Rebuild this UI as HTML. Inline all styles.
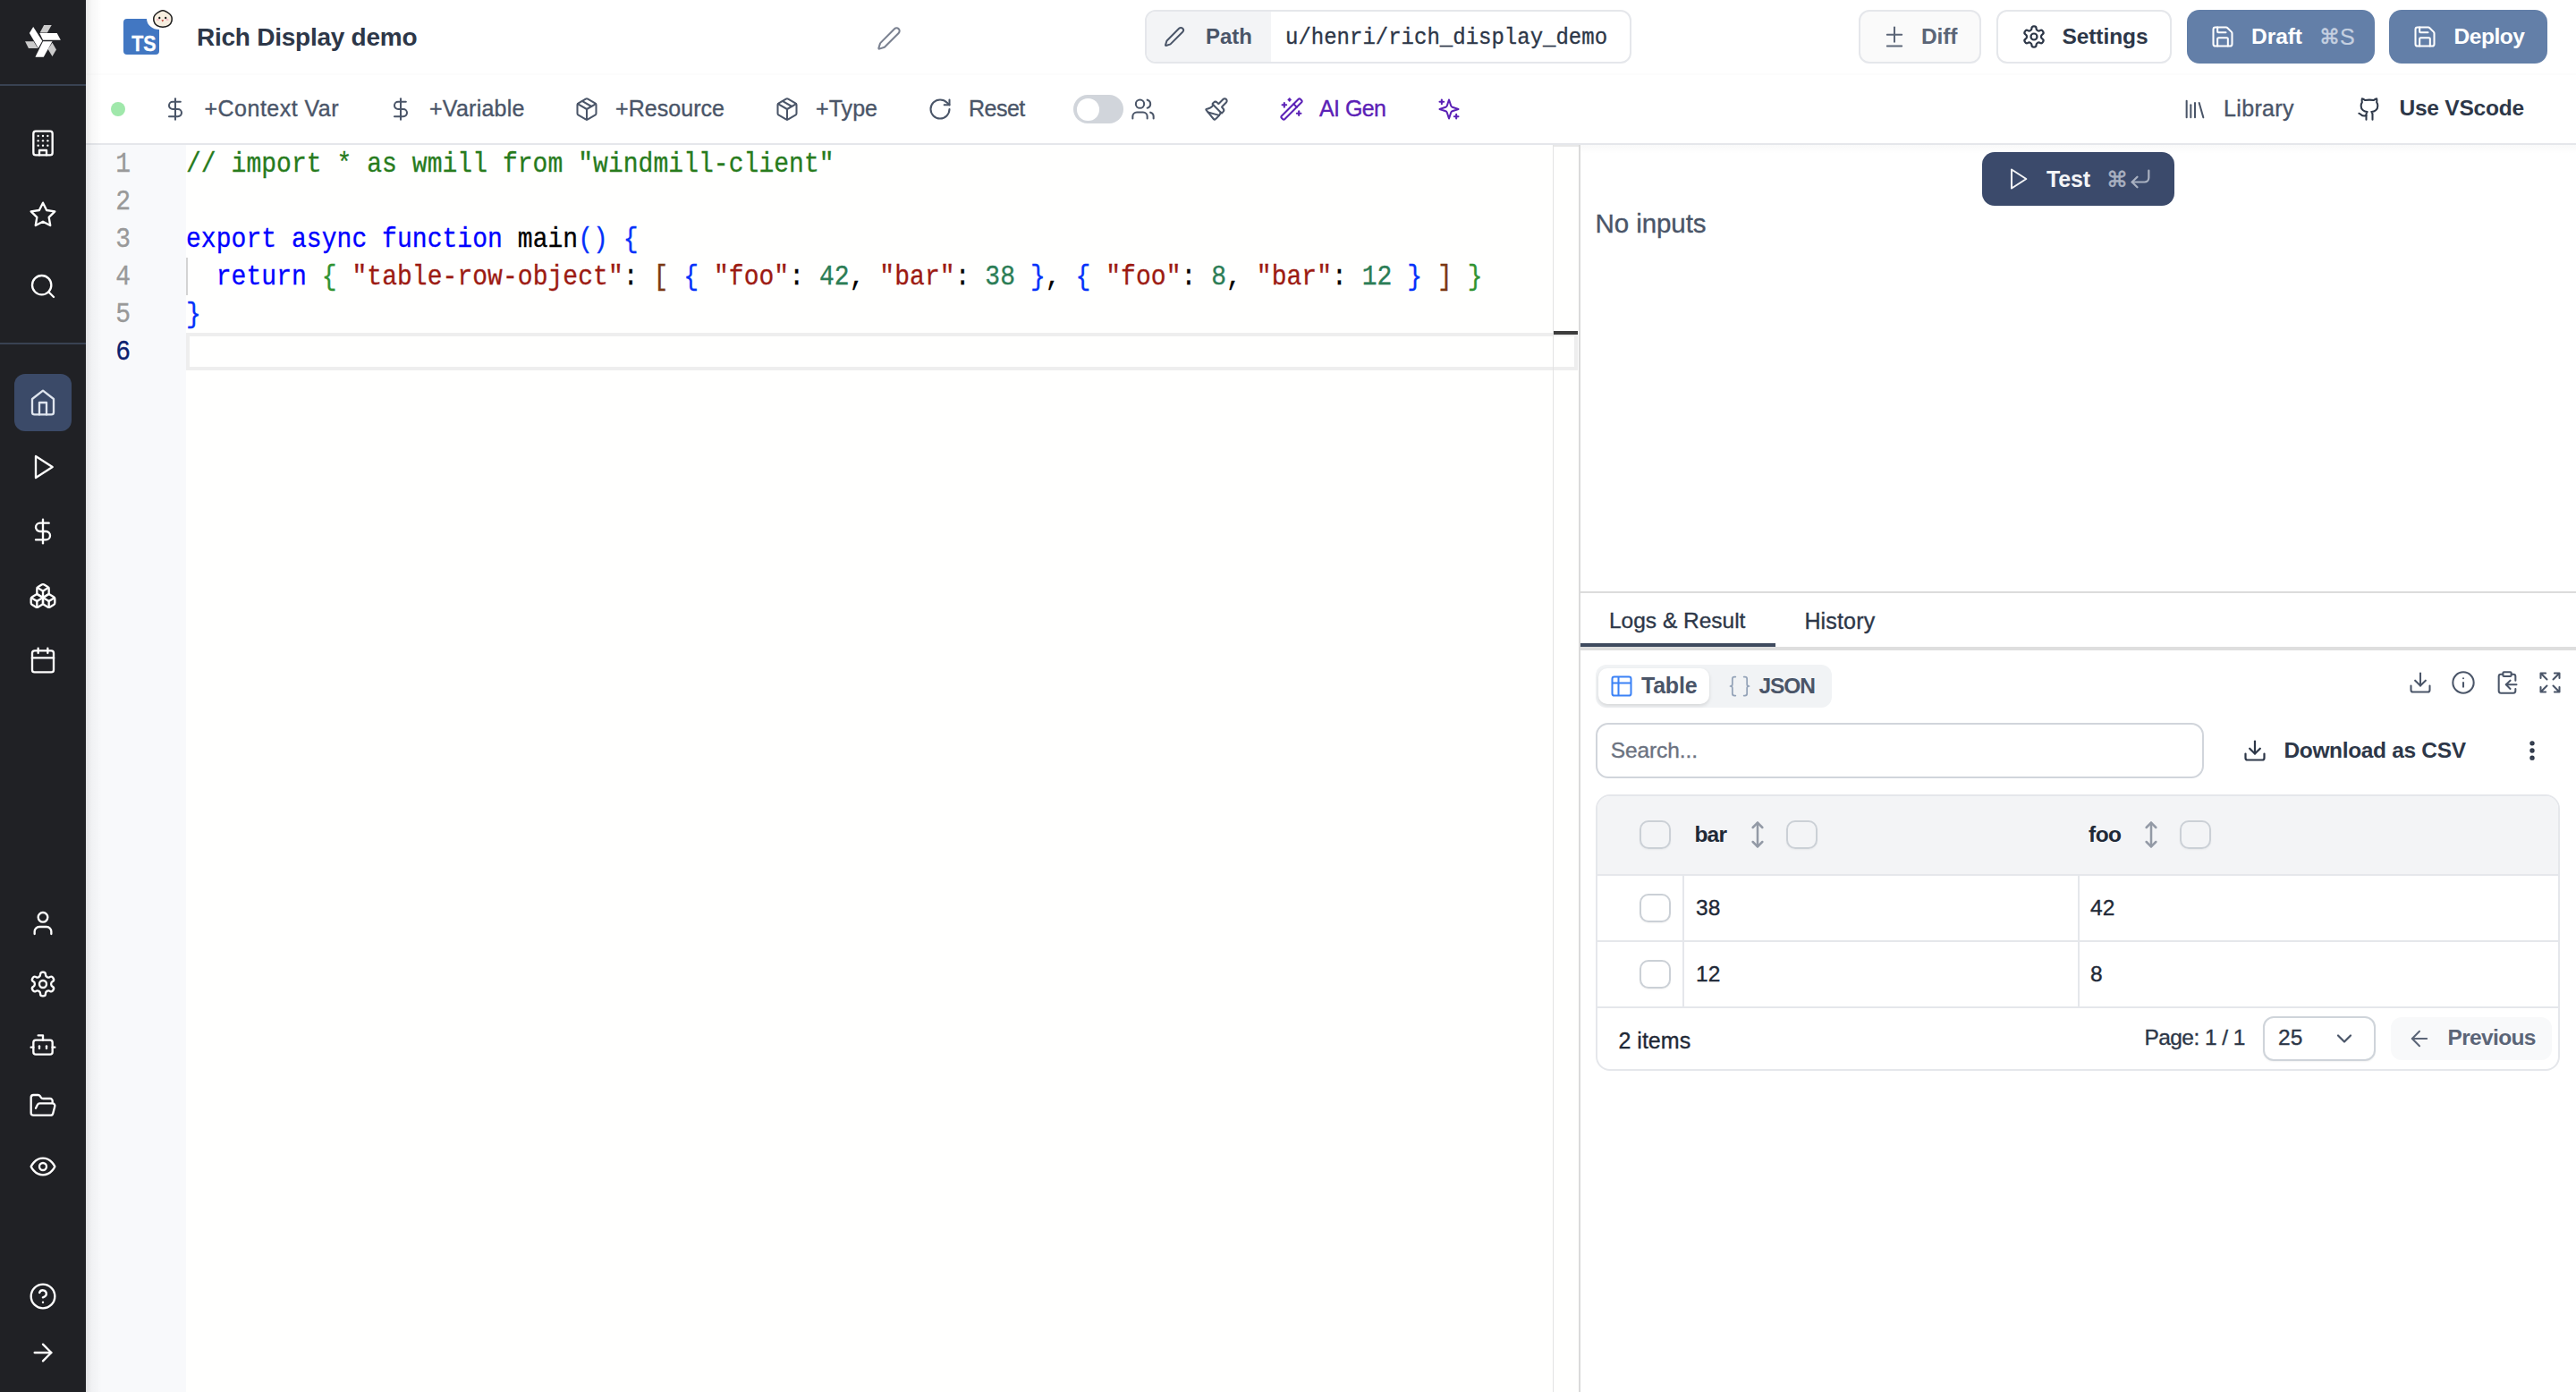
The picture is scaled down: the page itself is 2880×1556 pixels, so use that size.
<!DOCTYPE html>
<html><head><meta charset="utf-8"><title>Rich Display demo</title>
<style>
html,body{margin:0;padding:0;width:2880px;height:1556px;overflow:hidden;background:#fff;}
body{position:relative;font-family:"Liberation Sans", sans-serif;}
.a{position:absolute;}
.t{position:absolute;white-space:pre;}
.code{position:absolute;height:42px;line-height:42px;font-family:"Liberation Mono", monospace;font-size:28px;white-space:pre;color:#000;padding-top:2px;box-sizing:border-box;letter-spacing:0.05px;-webkit-text-stroke-width:0.3px;transform:scaleY(1.1);transform-origin:0 30.5px;}
.ln{text-align:right;}
</style></head><body>
<div class="a" style="left:0px;top:0px;width:96px;height:1556px;background:#202125"></div>
<div class="a" style="left:0px;top:94px;width:96px;height:2px;background:#394252"></div>
<div class="a" style="left:0px;top:383px;width:96px;height:2px;background:#394252"></div>
<svg class="a" style="left:20px;top:20px" width="56" height="52" viewBox="0 0 1499 1392">
<polygon points="215,700 470,700 600,910 320,910" fill="#cbcbcb"/>
<polygon points="660,440 780,215 1010,215 880,440" fill="#cbcbcb"/>
<polygon points="900,940 1030,740 1150,950 1030,1150" fill="#cbcbcb"/>
<polygon points="345,455 460,265 730,690 610,905" fill="#ffffff"/>
<polygon points="650,455 1170,455 1280,660 750,660" fill="#ffffff"/>
<polygon points="750,700 1030,700 770,1170 520,1170" fill="#ffffff"/>
</svg>
<svg class="a" style="left:32.0px;top:144.0px;" width="32" height="32" viewBox="0 0 24 24" fill="none" stroke="#ffffff" stroke-width="1.75" stroke-linecap="round" stroke-linejoin="round"><rect width="16" height="20" x="4" y="2" rx="2" ry="2"/><path d="M9 22v-4h6v4"/><path d="M8 6h.01"/><path d="M16 6h.01"/><path d="M12 6h.01"/><path d="M12 10h.01"/><path d="M12 14h.01"/><path d="M16 10h.01"/><path d="M16 14h.01"/><path d="M8 10h.01"/><path d="M8 14h.01"/></svg>
<svg class="a" style="left:32.0px;top:223.5px;" width="32" height="32" viewBox="0 0 24 24" fill="none" stroke="#ffffff" stroke-width="1.75" stroke-linecap="round" stroke-linejoin="round"><polygon points="12 2 15.09 8.26 22 9.27 17 14.14 18.18 21.02 12 17.77 5.82 21.02 7 14.14 2 9.27 8.91 8.26 12 2"/></svg>
<svg class="a" style="left:32.0px;top:304.0px;" width="32" height="32" viewBox="0 0 24 24" fill="none" stroke="#ffffff" stroke-width="1.75" stroke-linecap="round" stroke-linejoin="round"><circle cx="11" cy="11" r="8"/><path d="m21 21-4.3-4.3"/></svg>
<div class="a" style="left:16px;top:418px;width:64px;height:64px;background:#3b4a68;border-radius:12px"></div>
<svg class="a" style="left:32.0px;top:434.0px;" width="32" height="32" viewBox="0 0 24 24" fill="none" stroke="#dfe5ee" stroke-width="1.75" stroke-linecap="round" stroke-linejoin="round"><path d="m3 9 9-7 9 7v11a2 2 0 0 1-2 2H5a2 2 0 0 1-2-2z"/><polyline points="9 22 9 12 15 12 15 22"/></svg>
<svg class="a" style="left:32.0px;top:505.7px;" width="32" height="32" viewBox="0 0 24 24" fill="none" stroke="#ffffff" stroke-width="1.75" stroke-linecap="round" stroke-linejoin="round"><polygon points="6 3 20 12 6 21 6 3"/></svg>
<svg class="a" style="left:32.0px;top:578.0px;" width="32" height="32" viewBox="0 0 24 24" fill="none" stroke="#ffffff" stroke-width="1.75" stroke-linecap="round" stroke-linejoin="round"><line x1="12" x2="12" y1="2" y2="22"/><path d="M17 5H9.5a3.5 3.5 0 0 0 0 7h5a3.5 3.5 0 0 1 0 7H6"/></svg>
<svg class="a" style="left:32.0px;top:650.0px;" width="32" height="32" viewBox="0 0 24 24" fill="none" stroke="#ffffff" stroke-width="1.75" stroke-linecap="round" stroke-linejoin="round"><path d="M2.97 12.92A2 2 0 0 0 2 14.63v3.24a2 2 0 0 0 .97 1.71l3 1.8a2 2 0 0 0 2.06 0L12 19v-5.5l-5-3-4.03 2.42Z"/><path d="m7 16.5-4.74-2.85"/><path d="m7 16.5 5-3"/><path d="M7 16.5v5.17"/><path d="M12 13.5V19l3.970 2.38a2 2 0 0 0 2.06 0l3-1.8a2 2 0 0 0 .97-1.71v-3.24a2 2 0 0 0-.97-1.71L17 10.5l-5 3Z"/><path d="m17 16.5-5-3"/><path d="m17 16.5 4.74-2.85"/><path d="M17 16.5v5.17"/><path d="M7.97 4.42A2 2 0 0 0 7 6.13v4.37l5 3 5-3V6.13a2 2 0 0 0-.97-1.71l-3-1.8a2 2 0 0 0-2.06 0l-3 1.8Z"/><path d="M12 8 7.26 5.15"/><path d="m12 8 4.74-2.85"/><path d="M12 13.5V8"/></svg>
<svg class="a" style="left:32.0px;top:721.5px;" width="32" height="32" viewBox="0 0 24 24" fill="none" stroke="#ffffff" stroke-width="1.75" stroke-linecap="round" stroke-linejoin="round"><path d="M8 2v4"/><path d="M16 2v4"/><rect width="18" height="18" x="3" y="4" rx="2"/><path d="M3 10h18"/></svg>
<svg class="a" style="left:32.0px;top:1016.0px;" width="32" height="32" viewBox="0 0 24 24" fill="none" stroke="#ffffff" stroke-width="1.75" stroke-linecap="round" stroke-linejoin="round"><path d="M19 21v-2a4 4 0 0 0-4-4H9a4 4 0 0 0-4 4v2"/><circle cx="12" cy="7" r="4"/></svg>
<svg class="a" style="left:32.0px;top:1084.0px;" width="32" height="32" viewBox="0 0 24 24" fill="none" stroke="#ffffff" stroke-width="1.75" stroke-linecap="round" stroke-linejoin="round"><path d="M12.22 2h-.44a2 2 0 0 0-2 2v.18a2 2 0 0 1-1 1.73l-.43.25a2 2 0 0 1-2 0l-.15-.08a2 2 0 0 0-2.73.73l-.22.38a2 2 0 0 0 .73 2.73l.15.1a2 2 0 0 1 1 1.72v.51a2 2 0 0 1-1 1.74l-.15.09a2 2 0 0 0-.73 2.73l.22.38a2 2 0 0 0 2.73.73l.15-.08a2 2 0 0 1 2 0l.43.25a2 2 0 0 1 1 1.73V20a2 2 0 0 0 2 2h.44a2 2 0 0 0 2-2v-.18a2 2 0 0 1 1-1.73l.43-.25a2 2 0 0 1 2 0l.15.08a2 2 0 0 0 2.73-.73l.22-.39a2 2 0 0 0-.73-2.73l-.15-.08a2 2 0 0 1-1-1.74v-.5a2 2 0 0 1 1-1.74l.15-.09a2 2 0 0 0 .73-2.73l-.22-.38a2 2 0 0 0-2.73-.73l-.15.08a2 2 0 0 1-2 0l-.43-.25a2 2 0 0 1-1-1.73V4a2 2 0 0 0-2-2z"/><circle cx="12" cy="12" r="3"/></svg>
<svg class="a" style="left:32.0px;top:1152.0px;" width="32" height="32" viewBox="0 0 24 24" fill="none" stroke="#ffffff" stroke-width="1.75" stroke-linecap="round" stroke-linejoin="round"><path d="M12 8V4H8"/><rect width="16" height="12" x="4" y="8" rx="2"/><path d="M2 14h2"/><path d="M20 14h2"/><path d="M15 13v2"/><path d="M9 13v2"/></svg>
<svg class="a" style="left:32.0px;top:1220.0px;" width="32" height="32" viewBox="0 0 24 24" fill="none" stroke="#ffffff" stroke-width="1.75" stroke-linecap="round" stroke-linejoin="round"><path d="m6 14 1.5-2.9A2 2 0 0 1 9.24 10H20a2 2 0 0 1 1.94 2.5l-1.54 6a2 2 0 0 1-1.95 1.5H4a2 2 0 0 1-2-2V5a2 2 0 0 1 2-2h3.9a2 2 0 0 1 1.69.9l.81 1.2a2 2 0 0 0 1.67.9H18a2 2 0 0 1 2 2v2"/></svg>
<svg class="a" style="left:32.0px;top:1288.0px;" width="32" height="32" viewBox="0 0 24 24" fill="none" stroke="#ffffff" stroke-width="1.75" stroke-linecap="round" stroke-linejoin="round"><path d="M2 12s3-7 10-7 10 7 10 7-3 7-10 7-10-7-10-7Z"/><circle cx="12" cy="12" r="3"/></svg>
<svg class="a" style="left:32.0px;top:1433.0px;" width="32" height="32" viewBox="0 0 24 24" fill="none" stroke="#ffffff" stroke-width="1.75" stroke-linecap="round" stroke-linejoin="round"><circle cx="12" cy="12" r="10"/><path d="M9.09 9a3 3 0 0 1 5.83 1c0 2-3 3-3 3"/><path d="M12 17h.01"/></svg>
<svg class="a" style="left:32.0px;top:1496.0px;" width="32" height="32" viewBox="0 0 24 24" fill="none" stroke="#ffffff" stroke-width="1.75" stroke-linecap="round" stroke-linejoin="round"><path d="M5 12h14"/><path d="m12 5 7 7-7 7"/></svg>
<div class="a" style="left:96px;top:0px;width:2784px;height:160px;background:#ffffff"></div>
<div class="a" style="left:96px;top:160px;width:2784px;height:2px;background:#e5e7eb"></div>
<div class="a" style="left:96px;top:82px;width:2784px;height:2px;background:rgba(0,0,0,0.012)"></div>
<svg class="a" style="left:138px;top:21px" width="40" height="40" viewBox="0 0 40 40">
<path d="M4,0 H26 A14,12 0 0 0 40,12 V36 A4,4 0 0 1 36,40 H4 A4,4 0 0 1 0,36 V4 A4,4 0 0 1 4,0 Z" fill="#4277c2"/>
<text x="9.3" y="36.4" font-family="Liberation Sans" font-weight="bold" font-size="24.5" textLength="27.3" lengthAdjust="spacingAndGlyphs" fill="#ffffff" stroke="#ffffff" stroke-width="0.4">TS</text>
</svg>
<svg class="a" style="left:170px;top:10px" width="24" height="22" viewBox="0 0 24 22">
<path d="M12,1.8 C14.5,1.8 17,3.5 19.5,5.5 C22,7.5 22.6,10.5 22,13.5 C21,18 16.5,20.2 12,20.2 C7.5,20.2 3,18 2,13.5 C1.4,10.5 2,7.5 4.5,5.5 C7,3.5 9.5,1.8 12,1.8 Z" fill="#f6eedf" stroke="#1a1a1a" stroke-width="1.5"/>
<ellipse cx="8.3" cy="10" rx="1.1" ry="1.3" fill="#111"/><ellipse cx="15.2" cy="10" rx="1.1" ry="1.3" fill="#111"/>
<ellipse cx="6.5" cy="12" rx="1.6" ry="0.9" fill="#f4b8c8"/><ellipse cx="17" cy="12" rx="1.6" ry="0.9" fill="#f4b8c8"/>
<path d="M10.4,12.2 L13.2,12.2 L11.8,14.6 Z" fill="#c0392b"/>
</svg>
<div class="t" style="left:220.0px;top:24.3px;font-size:28px;line-height:36px;font-family:'Liberation Sans', sans-serif;font-weight:bold;color:#2d3748;letter-spacing:-0.25px;">Rich Display demo</div>
<svg class="a" style="left:980.0px;top:29.0px;" width="28" height="28" viewBox="0 0 24 24" fill="none" stroke="#7a8190" stroke-width="1.75" stroke-linecap="round" stroke-linejoin="round"><path d="M21.174 6.812a1 1 0 0 0-3.986-3.987L3.842 16.174a2 2 0 0 0-.5.83l-1.321 4.352a.5.5 0 0 0 .623.622l4.353-1.32a2 2 0 0 0 .83-.497z"/></svg>
<div class="a" style="left:1280px;top:11px;width:544px;height:60px;border:2px solid #e5e7eb;border-radius:12px;box-sizing:border-box;background:#fff;overflow:hidden"></div>
<div class="a" style="left:1282px;top:13px;width:139px;height:56px;background:#f3f4f6;border-radius:10px 0 0 10px"></div>
<svg class="a" style="left:1300.5px;top:28.5px;" width="24" height="24" viewBox="0 0 24 24" fill="none" stroke="#4a5568" stroke-width="2" stroke-linecap="round" stroke-linejoin="round"><path d="M21.174 6.812a1 1 0 0 0-3.986-3.987L3.842 16.174a2 2 0 0 0-.5.83l-1.321 4.352a.5.5 0 0 0 .623.622l4.353-1.32a2 2 0 0 0 .83-.497z"/></svg>
<div class="t" style="left:1348.0px;top:25.2px;font-size:24px;line-height:31px;font-family:'Liberation Sans', sans-serif;font-weight:bold;color:#4a5568;">Path</div>
<div class="t" style="left:1437.0px;top:27.1px;font-size:24px;line-height:31px;font-family:'Liberation Mono', monospace;font-weight:normal;color:#2d3748;-webkit-text-stroke:0.3px #2d3748;transform:scaleY(1.08);transform-origin:0 70%;">u/henri/rich_display_demo</div>
<div class="a" style="left:2078px;top:11px;width:137px;height:60px;border:2px solid #e5e7eb;border-radius:12px;box-sizing:border-box;background:#fafafa"></div>
<svg class="a" style="left:2104.0px;top:27.0px;" width="28" height="28" viewBox="0 0 24 24" fill="none" stroke="#5b6577" stroke-width="1.75" stroke-linecap="round" stroke-linejoin="round"><path d="M12 3v14"/><path d="M5 10h14"/><path d="M5 21h14"/></svg>
<div class="t" style="left:2148.0px;top:24.5px;font-size:24.5px;line-height:32px;font-family:'Liberation Sans', sans-serif;font-weight:bold;color:#5b6577;letter-spacing:-0.133px;">Diff</div>
<div class="a" style="left:2232px;top:11px;width:196px;height:60px;border:2px solid #e5e7eb;border-radius:12px;box-sizing:border-box;background:#fff"></div>
<svg class="a" style="left:2260.0px;top:27.0px;" width="28" height="28" viewBox="0 0 24 24" fill="none" stroke="#2d3748" stroke-width="1.9" stroke-linecap="round" stroke-linejoin="round"><path d="M12.22 2h-.44a2 2 0 0 0-2 2v.18a2 2 0 0 1-1 1.73l-.43.25a2 2 0 0 1-2 0l-.15-.08a2 2 0 0 0-2.73.73l-.22.38a2 2 0 0 0 .73 2.73l.15.1a2 2 0 0 1 1 1.72v.51a2 2 0 0 1-1 1.74l-.15.09a2 2 0 0 0-.73 2.73l.22.38a2 2 0 0 0 2.73.73l.15-.08a2 2 0 0 1 2 0l.43.25a2 2 0 0 1 1 1.73V20a2 2 0 0 0 2 2h.44a2 2 0 0 0 2-2v-.18a2 2 0 0 1 1-1.73l.43-.25a2 2 0 0 1 2 0l.15.08a2 2 0 0 0 2.73-.73l.22-.39a2 2 0 0 0-.73-2.73l-.15-.08a2 2 0 0 1-1-1.74v-.5a2 2 0 0 1 1-1.74l.15-.09a2 2 0 0 0 .73-2.73l-.22-.38a2 2 0 0 0-2.73-.73l-.15.08a2 2 0 0 1-2 0l-.43-.25a2 2 0 0 1-1-1.73V4a2 2 0 0 0-2-2z"/><circle cx="12" cy="12" r="3"/></svg>
<div class="t" style="left:2305.5px;top:24.5px;font-size:24.5px;line-height:32px;font-family:'Liberation Sans', sans-serif;font-weight:bold;color:#2d3748;letter-spacing:-0.086px;">Settings</div>
<div class="a" style="left:2445px;top:11px;width:210px;height:60px;background:#637fa8;border-radius:14px"></div>
<svg class="a" style="left:2471.0px;top:27.0px;" width="28" height="28" viewBox="0 0 24 24" fill="none" stroke="#ffffff" stroke-width="1.75" stroke-linecap="round" stroke-linejoin="round"><path d="M15.2 3a2 2 0 0 1 1.4.6l3.8 3.8a2 2 0 0 1 .6 1.4V19a2 2 0 0 1-2 2H5a2 2 0 0 1-2-2V5a2 2 0 0 1 2-2z"/><path d="M17 21v-7a1 1 0 0 0-1-1H8a1 1 0 0 0-1 1v7"/><path d="M7 3v4a1 1 0 0 0 1 1h7"/></svg>
<div class="t" style="left:2517.0px;top:24.8px;font-size:24.5px;line-height:32px;font-family:'Liberation Sans', sans-serif;font-weight:bold;color:#ffffff;letter-spacing:-0.05px;">Draft</div>
<div class="t" style="left:2593.0px;top:27.3px;font-size:22.5px;line-height:29px;font-family:'Liberation Sans', sans-serif;font-weight:normal;color:#c5d0e0;-webkit-text-stroke:0.5px #c5d0e0;">&#8984;</div>
<div class="t" style="left:2616.0px;top:24.6px;font-size:25px;line-height:32px;font-family:'Liberation Sans', sans-serif;font-weight:normal;color:#c5d0e0;-webkit-text-stroke:0.2px #c5d0e0;">S</div>
<div class="a" style="left:2671px;top:11px;width:177px;height:60px;background:#637fa8;border-radius:14px"></div>
<svg class="a" style="left:2697.0px;top:27.0px;" width="28" height="28" viewBox="0 0 24 24" fill="none" stroke="#ffffff" stroke-width="1.75" stroke-linecap="round" stroke-linejoin="round"><path d="M15.2 3a2 2 0 0 1 1.4.6l3.8 3.8a2 2 0 0 1 .6 1.4V19a2 2 0 0 1-2 2H5a2 2 0 0 1-2-2V5a2 2 0 0 1 2-2z"/><path d="M17 21v-7a1 1 0 0 0-1-1H8a1 1 0 0 0-1 1v7"/><path d="M7 3v4a1 1 0 0 0 1 1h7"/></svg>
<div class="t" style="left:2743.5px;top:24.8px;font-size:24.5px;line-height:32px;font-family:'Liberation Sans', sans-serif;font-weight:bold;color:#ffffff;letter-spacing:-0.44px;">Deploy</div>
<div class="a" style="left:124px;top:114px;width:16px;height:16px;background:#a0e8ab;border-radius:50%"></div>
<svg class="a" style="left:182.0px;top:108.0px;" width="28" height="28" viewBox="0 0 24 24" fill="none" stroke="#4a5568" stroke-width="1.75" stroke-linecap="round" stroke-linejoin="round"><line x1="12" x2="12" y1="2" y2="22"/><path d="M17 5H9.5a3.5 3.5 0 0 0 0 7h5a3.5 3.5 0 0 1 0 7H6"/></svg>
<div class="t" style="left:228.5px;top:105.3px;font-size:25px;line-height:32px;font-family:'Liberation Sans', sans-serif;font-weight:normal;color:#4a5568;letter-spacing:0.482px;-webkit-text-stroke:0.35px #4a5568;">+Context Var</div>
<svg class="a" style="left:434.0px;top:108.0px;" width="28" height="28" viewBox="0 0 24 24" fill="none" stroke="#4a5568" stroke-width="1.75" stroke-linecap="round" stroke-linejoin="round"><line x1="12" x2="12" y1="2" y2="22"/><path d="M17 5H9.5a3.5 3.5 0 0 0 0 7h5a3.5 3.5 0 0 1 0 7H6"/></svg>
<div class="t" style="left:480.0px;top:105.3px;font-size:25px;line-height:32px;font-family:'Liberation Sans', sans-serif;font-weight:normal;color:#4a5568;letter-spacing:0.25px;-webkit-text-stroke:0.35px #4a5568;">+Variable</div>
<svg class="a" style="left:642.0px;top:108.0px;" width="28" height="28" viewBox="0 0 24 24" fill="none" stroke="#4a5568" stroke-width="1.75" stroke-linecap="round" stroke-linejoin="round"><path d="m7.5 4.27 9 5.15"/><path d="M21 8a2 2 0 0 0-1-1.73l-7-4a2 2 0 0 0-2 0l-7 4A2 2 0 0 0 3 8v8a2 2 0 0 0 1 1.73l7 4a2 2 0 0 0 2 0l7-4A2 2 0 0 0 21 16Z"/><path d="m3.3 7 8.7 5 8.7-5"/><path d="M12 22V12"/></svg>
<div class="t" style="left:688.0px;top:105.3px;font-size:25px;line-height:32px;font-family:'Liberation Sans', sans-serif;font-weight:normal;color:#4a5568;letter-spacing:0.05px;-webkit-text-stroke:0.35px #4a5568;">+Resource</div>
<svg class="a" style="left:866.0px;top:108.0px;" width="28" height="28" viewBox="0 0 24 24" fill="none" stroke="#4a5568" stroke-width="1.75" stroke-linecap="round" stroke-linejoin="round"><path d="m7.5 4.27 9 5.15"/><path d="M21 8a2 2 0 0 0-1-1.73l-7-4a2 2 0 0 0-2 0l-7 4A2 2 0 0 0 3 8v8a2 2 0 0 0 1 1.73l7 4a2 2 0 0 0 2 0l7-4A2 2 0 0 0 21 16Z"/><path d="m3.3 7 8.7 5 8.7-5"/><path d="M12 22V12"/></svg>
<div class="t" style="left:912.0px;top:105.3px;font-size:25px;line-height:32px;font-family:'Liberation Sans', sans-serif;font-weight:normal;color:#4a5568;letter-spacing:0.05px;-webkit-text-stroke:0.35px #4a5568;">+Type</div>
<svg class="a" style="left:1037.0px;top:108.0px;" width="28" height="28" viewBox="0 0 24 24" fill="none" stroke="#4a5568" stroke-width="1.75" stroke-linecap="round" stroke-linejoin="round"><path d="M21 12a9 9 0 1 1-9-9c2.52 0 4.930 1 6.74 2.74L21 8"/><path d="M21 3v5h-5"/></svg>
<div class="t" style="left:1083.0px;top:105.3px;font-size:25px;line-height:32px;font-family:'Liberation Sans', sans-serif;font-weight:normal;color:#4a5568;letter-spacing:-0.5px;-webkit-text-stroke:0.35px #4a5568;">Reset</div>
<div class="a" style="left:1200px;top:106px;width:56px;height:32px;background:#d1d5db;border-radius:16px"></div>
<div class="a" style="left:1204px;top:110px;width:24.5px;height:24.5px;background:#ffffff;border-radius:50%"></div>
<svg class="a" style="left:1264.0px;top:108.0px;" width="28" height="28" viewBox="0 0 24 24" fill="none" stroke="#4a5568" stroke-width="1.75" stroke-linecap="round" stroke-linejoin="round"><path d="M16 21v-2a4 4 0 0 0-4-4H6a4 4 0 0 0-4 4v2"/><circle cx="9" cy="7" r="4"/><path d="M22 21v-2a4 4 0 0 0-3-3.87"/><path d="M16 3.13a4 4 0 0 1 0 7.75"/></svg>
<svg class="a" style="left:1346.0px;top:108.0px;" width="28" height="28" viewBox="0 0 24 24" fill="none" stroke="#4a5568" stroke-width="1.75" stroke-linecap="round" stroke-linejoin="round"><path d="m14.622 17.897-10.68-2.913"/><path d="M18.376 2.622a1 1 0 1 1 3.002 3.002L17.36 9.643a.5.5 0 0 0 0 .707l.944.944a2.41 2.41 0 0 1 0 3.408l-.944.944a.5.5 0 0 1-.707 0L8.354 7.348a.5.5 0 0 1 0-.707l.944-.944a2.41 2.41 0 0 1 3.408 0l.944.944a.5.5 0 0 0 .707 0z"/><path d="M9 8c-1.804 2.71-3.97 3.46-6.583 3.948a.507.507 0 0 0-.302.819l7.32 8.883a1 1 0 0 0 1.185.204C12.735 20.405 16 16.792 16 15"/></svg>
<svg class="a" style="left:1430.0px;top:108.0px;" width="28" height="28" viewBox="0 0 24 24" fill="none" stroke="#5b21b6" stroke-width="1.75" stroke-linecap="round" stroke-linejoin="round"><path d="m21.64 3.64-1.28-1.28a1.21 1.21 0 0 0-1.72 0L2.36 18.64a1.21 1.21 0 0 0 0 1.72l1.28 1.28a1.2 1.2 0 0 0 1.72 0L21.64 5.36a1.2 1.2 0 0 0 0-1.72"/><path d="m14 7 3 3"/><path d="M5 6v4"/><path d="M19 14v4"/><path d="M10 2v2"/><path d="M7 8H3"/><path d="M21 16h-4"/><path d="M11 3H9"/></svg>
<div class="t" style="left:1475.0px;top:105.3px;font-size:25px;line-height:32px;font-family:'Liberation Sans', sans-serif;font-weight:normal;color:#5b21b6;letter-spacing:-0.56px;-webkit-text-stroke:0.35px #5b21b6;">AI Gen</div>
<svg class="a" style="left:1606.0px;top:108.0px;" width="28" height="28" viewBox="0 0 24 24" fill="none" stroke="#5b21b6" stroke-width="1.75" stroke-linecap="round" stroke-linejoin="round"><path d="m12 3-1.912 5.813a2 2 0 0 1-1.275 1.275L3 12l5.813 1.912a2 2 0 0 1 1.275 1.275L12 21l1.912-5.813a2 2 0 0 1 1.275-1.275L21 12l-5.813-1.912a2 2 0 0 1-1.275-1.275L12 3Z"/><path d="M5 3v4"/><path d="M19 17v4"/><path d="M3 5h4"/><path d="M17 19h4"/></svg>
<svg class="a" style="left:2440.0px;top:108.0px;" width="28" height="28" viewBox="0 0 24 24" fill="none" stroke="#4a5568" stroke-width="1.75" stroke-linecap="round" stroke-linejoin="round"><path d="m16 6 4 14"/><path d="M12 6v14"/><path d="M8 8v12"/><path d="M4 4v16"/></svg>
<div class="t" style="left:2486.0px;top:104.9px;font-size:25px;line-height:32px;font-family:'Liberation Sans', sans-serif;font-weight:normal;color:#4a5568;letter-spacing:0.35px;-webkit-text-stroke:0.35px #4a5568;">Library</div>
<svg class="a" style="left:2634.5px;top:108.0px;" width="28" height="28" viewBox="0 0 24 24" fill="none" stroke="#2d3748" stroke-width="1.75" stroke-linecap="round" stroke-linejoin="round"><path d="M15 22v-4a4.8 4.8 0 0 0-1-3.5c3 0 6-2 6-5.5.08-1.25-.27-2.48-1-3.5.28-1.15.28-2.35 0-3.5 0 0-1 0-3 1.5-2.64-.5-5.36-.5-8 0C6 2 5 2 5 2c-.3 1.15-.3 2.35 0 3.5A5.403 5.403 0 0 0 4 9c0 3.5 3 5.5 6 5.5-.39.49-.68 1.05-.85 1.65-.17.6-.22 1.23-.15 1.85v4"/><path d="M9 18c-4.51 2-5-2-7-2"/></svg>
<div class="t" style="left:2682.4px;top:105.1px;font-size:24.5px;line-height:32px;font-family:'Liberation Sans', sans-serif;font-weight:bold;color:#2d3748;letter-spacing:-0.2px;">Use VScode</div>
<div class="a" style="left:96px;top:162px;width:1669px;height:1394px;background:#fffffe"></div>
<div class="a" style="left:96px;top:162px;width:112px;height:1394px;background:#f8f9fb"></div>
<div class="a" style="left:96px;top:0px;width:18px;height:1556px;background:linear-gradient(to right, rgba(0,0,0,0.095), rgba(0,0,0,0.03) 35%, rgba(0,0,0,0))"></div>
<div class="a" style="left:208px;top:372px;width:1556px;height:42px;border:4px solid #eeeeee;box-sizing:border-box"></div>
<div class="a" style="left:208px;top:288px;width:2px;height:42px;background:#d3d3d3"></div>
<div class="a" style="left:1736px;top:162px;width:1px;height:1394px;background:#e3e3e3"></div>
<div class="a" style="left:1737px;top:370px;width:27px;height:4px;background:#3c3c3c"></div>
<div class="a" style="left:1765px;top:162px;width:2px;height:1394px;background:#dadada"></div>
<div class="a" style="left:1737px;top:162px;width:28px;height:2px;background:#e8e8e8"></div>
<div class="code" style="left:208px;top:162px"><span style="color:#277b1c">// import * as wmill from "windmill-client"</span></div>
<div class="code ln" style="left:96px;width:50px;top:162px;color:#999999">1</div>
<div class="code" style="left:208px;top:204px"></div>
<div class="code ln" style="left:96px;width:50px;top:204px;color:#999999">2</div>
<div class="code" style="left:208px;top:246px"><span style="color:#0000ff">export async function</span> <span style="color:#000000">main</span><span style="color:#0431fa">()</span> <span style="color:#0431fa">{</span></div>
<div class="code ln" style="left:96px;width:50px;top:246px;color:#999999">3</div>
<div class="code" style="left:208px;top:288px">  <span style="color:#0000ff">return</span> <span style="color:#319331">{</span> <span style="color:#9c1a12">"table-row-object"</span><span style="color:#000000">:</span> <span style="color:#7b3814">[</span> <span style="color:#0431fa">{</span> <span style="color:#9c1a12">"foo"</span><span style="color:#000000">:</span> <span style="color:#2b7d55">42</span><span style="color:#000000">,</span> <span style="color:#9c1a12">"bar"</span><span style="color:#000000">:</span> <span style="color:#2b7d55">38</span> <span style="color:#0431fa">}</span><span style="color:#000000">,</span> <span style="color:#0431fa">{</span> <span style="color:#9c1a12">"foo"</span><span style="color:#000000">:</span> <span style="color:#2b7d55">8</span><span style="color:#000000">,</span> <span style="color:#9c1a12">"bar"</span><span style="color:#000000">:</span> <span style="color:#2b7d55">12</span> <span style="color:#0431fa">}</span> <span style="color:#7b3814">]</span> <span style="color:#319331">}</span></div>
<div class="code ln" style="left:96px;width:50px;top:288px;color:#999999">4</div>
<div class="code" style="left:208px;top:330px"><span style="color:#0431fa">}</span></div>
<div class="code ln" style="left:96px;width:50px;top:330px;color:#999999">5</div>
<div class="code" style="left:208px;top:372px"></div>
<div class="code ln" style="left:96px;width:50px;top:372px;color:#0b216f">6</div>
<div class="a" style="left:1767px;top:162px;width:1113px;height:1394px;background:#ffffff"></div>
<div class="a" style="left:1767px;top:162px;width:1113px;height:10px;background:linear-gradient(to bottom, rgba(0,0,0,0.025), rgba(0,0,0,0))"></div>
<div class="a" style="left:2216px;top:170px;width:215px;height:60px;background:#3b4a6b;border-radius:14px"></div>
<svg class="a" style="left:2242.0px;top:186.0px;" width="28" height="28" viewBox="0 0 24 24" fill="none" stroke="#f3f4f6" stroke-width="1.75" stroke-linecap="round" stroke-linejoin="round"><polygon points="6 3 20 12 6 21 6 3"/></svg>
<div class="t" style="left:2288.0px;top:183.6px;font-size:25px;line-height:32px;font-family:'Liberation Sans', sans-serif;font-weight:bold;color:#f3f4f6;letter-spacing:-0.167px;">Test</div>
<div class="t" style="left:2354.8px;top:184.5px;font-size:24px;line-height:31px;font-family:'Liberation Sans', sans-serif;font-weight:normal;color:#a9b1c1;-webkit-text-stroke:0.5px #a9b1c1;">&#8984;</div>
<svg class="a" style="left:2379.0px;top:185.7px;" width="28" height="28" viewBox="0 0 24 24" fill="none" stroke="#a9b1c1" stroke-width="1.9" stroke-linecap="round" stroke-linejoin="round"><polyline points="9 10 4 15 9 20"/><path d="M20 4v7a4 4 0 0 1-4 4H4"/></svg>
<div class="t" style="left:1783.5px;top:231.1px;font-size:29.5px;line-height:38px;font-family:'Liberation Sans', sans-serif;font-weight:normal;color:#4a5568;letter-spacing:-0.075px;-webkit-text-stroke:0.35px #4a5568;">No inputs</div>
<div class="a" style="left:1767px;top:661px;width:1113px;height:2px;background:#dcdcdc"></div>
<div class="t" style="left:1799.0px;top:678.3px;font-size:24.5px;line-height:32px;font-family:'Liberation Sans', sans-serif;font-weight:normal;color:#2d3748;letter-spacing:-0.008px;-webkit-text-stroke:0.35px #2d3748;">Logs &amp; Result</div>
<div class="t" style="left:2017.4px;top:678.1px;font-size:25px;line-height:32px;font-family:'Liberation Sans', sans-serif;font-weight:normal;color:#2d3748;letter-spacing:0.167px;-webkit-text-stroke:0.35px #2d3748;">History</div>
<div class="a" style="left:1767px;top:723px;width:1113px;height:4px;background:#dedede"></div>
<div class="a" style="left:1767px;top:719px;width:218px;height:4px;background:#3e4a5e"></div>
<div class="a" style="left:1784px;top:743px;width:264px;height:48px;background:#f1f3f5;border-radius:12px"></div>
<div class="a" style="left:1787px;top:747px;width:124px;height:40px;background:#ffffff;border-radius:10px;box-shadow:0 2px 4px rgba(0,0,0,0.12)"></div>
<svg class="a" style="left:1799.0px;top:753.0px;" width="28" height="28" viewBox="0 0 24 24" fill="none" stroke="#3b82f6" stroke-width="1.75" stroke-linecap="round" stroke-linejoin="round"><path d="M9 3H5a2 2 0 0 0-2 2v4m6-6h10a2 2 0 0 1 2 2v4M9 3v18m0 0h10a2 2 0 0 0 2-2V9M9 21H5a2 2 0 0 1-2-2V9m0 0h18"/></svg>
<div class="t" style="left:1835.0px;top:750.3px;font-size:25px;line-height:32px;font-family:'Liberation Sans', sans-serif;font-weight:bold;color:#4a5568;letter-spacing:-0.225px;">Table</div>
<svg class="a" style="left:1931.0px;top:753.0px;" width="28" height="28" viewBox="0 0 24 24" fill="none" stroke="#94a3b8" stroke-width="1.5" stroke-linecap="round" stroke-linejoin="round"><path d="M8 3H7a2 2 0 0 0-2 2v5a2 2 0 0 1-2 2 2 2 0 0 1 2 2v5c0 1.1.9 2 2 2h1"/><path d="M16 21h1a2 2 0 0 0 2-2v-5c0-1.1.9-2 2-2a2 2 0 0 1-2-2V5a2 2 0 0 0-2-2h-1"/></svg>
<div class="t" style="left:1966.4px;top:750.5px;font-size:24.5px;line-height:32px;font-family:'Liberation Sans', sans-serif;font-weight:bold;color:#4a5568;letter-spacing:-1.033px;">JSON</div>
<svg class="a" style="left:2692.0px;top:749.0px;" width="28" height="28" viewBox="0 0 24 24" fill="none" stroke="#4a5568" stroke-width="1.75" stroke-linecap="round" stroke-linejoin="round"><path d="M21 15v4a2 2 0 0 1-2 2H5a2 2 0 0 1-2-2v-4"/><polyline points="7 10 12 15 17 10"/><line x1="12" x2="12" y1="15" y2="3"/></svg>
<svg class="a" style="left:2740.0px;top:749.0px;" width="28" height="28" viewBox="0 0 24 24" fill="none" stroke="#4a5568" stroke-width="1.75" stroke-linecap="round" stroke-linejoin="round"><circle cx="12" cy="12" r="10"/><path d="M12 16v-4"/><path d="M12 8h.01"/></svg>
<svg class="a" style="left:2788.5px;top:749.0px;" width="28" height="28" viewBox="0 0 24 24" fill="none" stroke="#4a5568" stroke-width="1.75" stroke-linecap="round" stroke-linejoin="round"><rect width="8" height="4" x="8" y="2" rx="1" ry="1"/><path d="M8 4H6a2 2 0 0 0-2 2v14a2 2 0 0 0 2 2h12a2 2 0 0 0 2-2v-2"/><path d="M16 4h2a2 2 0 0 1 2 2v4"/><path d="M21 14H11"/><path d="m15 10-4 4 4 4"/></svg>
<svg class="a" style="left:2836.5px;top:749.0px;" width="28" height="28" viewBox="0 0 24 24" fill="none" stroke="#4a5568" stroke-width="1.75" stroke-linecap="round" stroke-linejoin="round"><path d="m21 21-6-6m6 6v-4.8m0 4.8h-4.8"/><path d="M3 16.2V21m0 0h4.8M3 21l6-6"/><path d="M21 7.8V3m0 0h-4.8M21 3l-6 6"/><path d="M3 7.8V3m0 0h4.8M3 3l6 6"/></svg>
<div class="a" style="left:1784px;top:808px;width:680px;height:62px;border:2px solid #d1d5db;border-radius:14px;box-sizing:border-box;background:#fff"></div>
<div class="t" style="left:1800.7px;top:822.8px;font-size:24.5px;line-height:32px;font-family:'Liberation Sans', sans-serif;font-weight:normal;color:#6b7280;letter-spacing:-0.088px;-webkit-text-stroke:0.35px #6b7280;">Search...</div>
<svg class="a" style="left:2507.0px;top:825.0px;" width="28" height="28" viewBox="0 0 24 24" fill="none" stroke="#2d3748" stroke-width="1.9" stroke-linecap="round" stroke-linejoin="round"><path d="M21 15v4a2 2 0 0 1-2 2H5a2 2 0 0 1-2-2v-4"/><polyline points="7 10 12 15 17 10"/><line x1="12" x2="12" y1="15" y2="3"/></svg>
<div class="t" style="left:2553.4px;top:823.0px;font-size:24.5px;line-height:32px;font-family:'Liberation Sans', sans-serif;font-weight:bold;color:#2d3748;letter-spacing:-0.336px;">Download as CSV</div>
<svg class="a" style="left:2817.0px;top:825.0px;" width="28" height="28" viewBox="0 0 24 24" fill="none" stroke="#2d3748" stroke-width="2.6" stroke-linecap="round" stroke-linejoin="round"><circle cx="12" cy="12" r="1"/><circle cx="12" cy="5" r="1"/><circle cx="12" cy="19" r="1"/></svg>
<div class="a" style="left:1784px;top:888px;width:1078px;height:309px;border:2px solid #e5e7eb;border-radius:16px;box-sizing:border-box;background:#fff;overflow:hidden"></div>
<div class="a" style="left:1786px;top:890px;width:1074px;height:87px;background:#f3f4f6;border-radius:14px 14px 0 0"></div>
<div class="a" style="left:1786px;top:977px;width:1074px;height:2px;background:#e5e7eb"></div>
<div class="a" style="left:1786px;top:1051px;width:1074px;height:2px;background:#e5e7eb"></div>
<div class="a" style="left:1786px;top:1125px;width:1074px;height:2px;background:#e5e7eb"></div>
<div class="a" style="left:1881px;top:979px;width:2px;height:146px;background:#e5e7eb"></div>
<div class="a" style="left:2323px;top:979px;width:2px;height:146px;background:#e5e7eb"></div>
<div class="a" style="left:1833px;top:917px;width:35px;height:32px;border:2px solid #cbd0d6;border-radius:10px;box-sizing:border-box;box-shadow:0 1px 2px rgba(0,0,0,0.05)"></div>
<div class="a" style="left:1997px;top:917px;width:35px;height:32px;border:2px solid #cbd0d6;border-radius:10px;box-sizing:border-box;box-shadow:0 1px 2px rgba(0,0,0,0.05)"></div>
<div class="a" style="left:2437px;top:917px;width:35px;height:32px;border:2px solid #cbd0d6;border-radius:10px;box-sizing:border-box;box-shadow:0 1px 2px rgba(0,0,0,0.05)"></div>
<div class="t" style="left:1894.4px;top:916.5px;font-size:24.5px;line-height:32px;font-family:'Liberation Sans', sans-serif;font-weight:bold;color:#1f2937;letter-spacing:-0.75px;">bar</div>
<svg class="a" style="left:1949.0px;top:917.0px;" width="32" height="32" viewBox="0 0 24 24" fill="none" stroke="#939aa6" stroke-width="1.9" stroke-linecap="round" stroke-linejoin="round"><polyline points="8 18 12 22 16 18"/><polyline points="8 6 12 2 16 6"/><line x1="12" x2="12" y1="2" y2="22"/></svg>
<div class="t" style="left:2335.0px;top:916.5px;font-size:24.5px;line-height:32px;font-family:'Liberation Sans', sans-serif;font-weight:bold;color:#1f2937;letter-spacing:-0.5px;">foo</div>
<svg class="a" style="left:2389.0px;top:917.0px;" width="32" height="32" viewBox="0 0 24 24" fill="none" stroke="#939aa6" stroke-width="1.9" stroke-linecap="round" stroke-linejoin="round"><polyline points="8 18 12 22 16 18"/><polyline points="8 6 12 2 16 6"/><line x1="12" x2="12" y1="2" y2="22"/></svg>
<div class="a" style="left:1833px;top:999px;width:35px;height:32px;border:2px solid #cbd0d6;border-radius:10px;box-sizing:border-box;background:#fff;box-shadow:0 1px 2px rgba(0,0,0,0.05)"></div>
<div class="a" style="left:1833px;top:1073px;width:35px;height:32px;border:2px solid #cbd0d6;border-radius:10px;box-sizing:border-box;background:#fff;box-shadow:0 1px 2px rgba(0,0,0,0.05)"></div>
<div class="t" style="left:1896.0px;top:998.5px;font-size:24.5px;line-height:32px;font-family:'Liberation Sans', sans-serif;font-weight:normal;color:#1f2937;-webkit-text-stroke:0.35px #1f2937;">38</div>
<div class="t" style="left:2337.0px;top:998.5px;font-size:24.5px;line-height:32px;font-family:'Liberation Sans', sans-serif;font-weight:normal;color:#1f2937;-webkit-text-stroke:0.35px #1f2937;">42</div>
<div class="t" style="left:1896.0px;top:1072.5px;font-size:24.5px;line-height:32px;font-family:'Liberation Sans', sans-serif;font-weight:normal;color:#1f2937;-webkit-text-stroke:0.35px #1f2937;">12</div>
<div class="t" style="left:2337.0px;top:1072.5px;font-size:24.5px;line-height:32px;font-family:'Liberation Sans', sans-serif;font-weight:normal;color:#1f2937;-webkit-text-stroke:0.35px #1f2937;">8</div>
<div class="t" style="left:1809.4px;top:1147.3px;font-size:25px;line-height:32px;font-family:'Liberation Sans', sans-serif;font-weight:normal;color:#1f2937;letter-spacing:0.033px;-webkit-text-stroke:0.35px #1f2937;">2 items</div>
<div class="t" style="left:2397.4px;top:1144.3px;font-size:24.5px;line-height:32px;font-family:'Liberation Sans', sans-serif;font-weight:normal;color:#2d3748;letter-spacing:-0.55px;-webkit-text-stroke:0.35px #2d3748;">Page: 1 / 1</div>
<div class="a" style="left:2530px;top:1136px;width:126px;height:50px;border:2px solid #cfd4da;border-radius:12px;box-sizing:border-box;background:#fff;box-shadow:0 1px 2px rgba(0,0,0,0.05)"></div>
<div class="t" style="left:2547.0px;top:1144.3px;font-size:24.5px;line-height:32px;font-family:'Liberation Sans', sans-serif;font-weight:normal;color:#2d3748;-webkit-text-stroke:0.35px #2d3748;">25</div>
<svg class="a" style="left:2607.0px;top:1147.0px;" width="28" height="28" viewBox="0 0 24 24" fill="none" stroke="#4a5568" stroke-width="1.9" stroke-linecap="round" stroke-linejoin="round"><path d="m6 9 6 6 6-6"/></svg>
<div class="a" style="left:2673px;top:1137px;width:180px;height:48px;background:#f8f9fa;border-radius:12px"></div>
<svg class="a" style="left:2690.5px;top:1147.0px;" width="28" height="28" viewBox="0 0 24 24" fill="none" stroke="#5b6577" stroke-width="1.75" stroke-linecap="round" stroke-linejoin="round"><path d="m12 19-7-7 7-7"/><path d="M19 12H5"/></svg>
<div class="t" style="left:2736.5px;top:1144.3px;font-size:24.5px;line-height:32px;font-family:'Liberation Sans', sans-serif;font-weight:bold;color:#5b6577;letter-spacing:-0.657px;">Previous</div>
</body></html>
